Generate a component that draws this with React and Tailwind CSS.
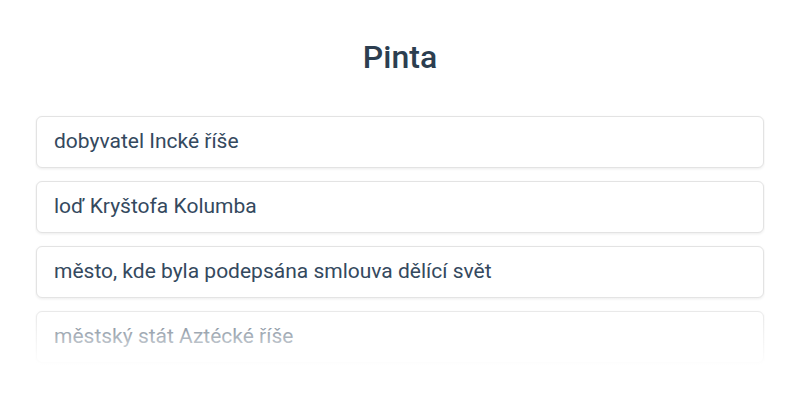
import React from 'react';

const options = [
  'dobyvatel Incké říše',
  'loď Kryštofa Kolumba',
  'město, kde byla podepsána smlouva dělící svět',
  'městský stát Aztécké říše',
];

export default function App() {
  return (
    <div className="w-[800px] h-[400px] bg-white font-['Roboto',sans-serif] overflow-hidden">
      <h1 className="pt-[37px] text-center text-[32px] leading-[40px] font-medium text-[#2c3e50]">Pinta</h1>
      <div className="relative mt-[38px] mx-[35px] h-[252px] overflow-hidden">
        <div className="flex flex-col gap-[13px] pt-[1px] px-[1px]">
          {options.map((o) => (
            <div
              key={o}
              className="h-[52px] flex items-center px-[17px] rounded-[6px] border border-[#e3e3e3] bg-white shadow-[0_1px_3px_rgba(0,0,0,0.08)] text-[21px] text-[#34495e]"
            >
              {o}
            </div>
          ))}
        </div>
        <div className="pointer-events-none absolute left-0 right-0 bottom-0 h-[72px] bg-gradient-to-b from-white/0 to-white" />
      </div>
    </div>
  );
}
